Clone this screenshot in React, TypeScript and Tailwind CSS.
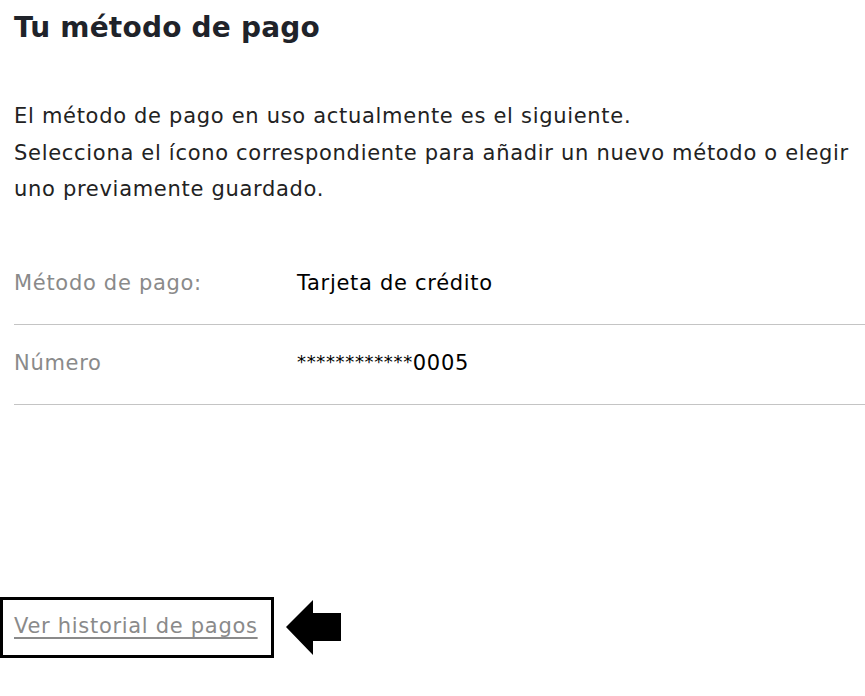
export default function App() {
  return (
    <div className="w-[865px] h-[696px] bg-white font-['DejaVu_Sans','Liberation_Sans',sans-serif] text-[#222] tracking-[0.7px]">
      <div className="pl-[14px]">
        <h1 className="pt-[12px] text-[28px] leading-[32px] font-bold tracking-[0.2px] text-[#1f232a]">Tu método de pago</h1>
        <p className="mt-[54px] text-[21px] leading-[36.5px] text-[#222]">
          El método de pago en uso actualmente es el siguiente.
          <br />
          Selecciona el ícono correspondiente para añadir un nuevo método o elegir uno previamente guardado.
        </p>
        <div className="mt-[37px]">
          <div className="flex items-center h-[80px] border-b border-[#c4c4c4]">
            <span className="w-[283px] text-[21px] text-[#8a8a8a]">Método de pago:</span>
            <span className="text-[21px] text-black">Tarjeta de crédito</span>
          </div>
          <div className="flex items-center h-[80px] border-b border-[#c4c4c4]">
            <span className="w-[283px] text-[21px] text-[#8a8a8a]">Número</span>
            <span className="text-[21px] text-black">
              <span className="text-[18px] align-[2px] tracking-[0.65px]">************</span>0005
            </span>
          </div>
        </div>
      </div>
      <div className="mt-[192px] flex items-center">
        <div className="w-[274px] h-[61px] border-[3px] border-black flex items-center pl-[11px]">
          <a className="text-[21px] text-[#8a8a8a] underline underline-offset-[4px] decoration-[2px]">Ver historial de pagos</a>
        </div>
        <svg width="56" height="56" viewBox="0 0 56 56" className="ml-[12px]">
          <polygon points="0,28 27,1 27,14 55,14 55,42 27,42 27,56" fill="black" />
        </svg>
      </div>
    </div>
  );
}
